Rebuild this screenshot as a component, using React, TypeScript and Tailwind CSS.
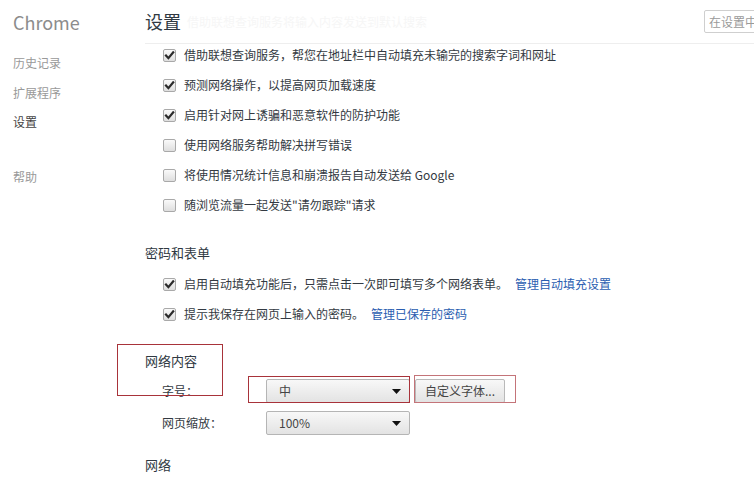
import React from 'react';

const font = { fontFamily: '"Noto Sans CJK SC", "Liberation Sans", sans-serif' };

function Check({ checked }: { checked: boolean }) {
  return (
    <span className="relative inline-block h-[13px] w-[13px] shrink-0 rounded-[2px] border border-[#a9a9a9] bg-gradient-to-b from-[#fafafa] to-[#dedede]">
      {checked && (
        <svg viewBox="0 0 13 13" className="absolute -left-px -top-px h-[13px] w-[13px]">
          <path d="M3 6.6 L5.4 9.2 L10.2 3.4" fill="none" stroke="#2a2a2a" strokeWidth="2.2" strokeLinecap="square" />
        </svg>
      )}
    </span>
  );
}

function Row({ checked, children }: { checked: boolean; children: React.ReactNode }) {
  return (
    <div className="flex h-[30px] items-center gap-[8px] pl-[18px] text-[12px] text-[#333a42]">
      <Check checked={checked} />
      <span>{children}</span>
    </div>
  );
}

function Select({ value }: { value: string }) {
  return (
    <div className="flex h-[24px] w-[144px] items-center justify-between rounded-[2px] border border-[#b5b5b5] bg-gradient-to-b from-[#f8f8f8] to-[#e3e3e3] pl-[12px] pr-[8px] text-[12px] text-[#444]">
      <span>{value}</span>
      <svg width="9" height="5" viewBox="0 0 9 5">
        <path d="M0 0 H9 L4.5 5 Z" fill="#111" />
      </svg>
    </div>
  );
}

export default function App() {
  return (
    <div className="relative flex h-[483px] w-[754px] overflow-hidden bg-white" style={font}>
      {/* side nav */}
      <div className="w-[145px] shrink-0 pl-[13px]">
        <div className="flex h-[44px] items-center text-[18px] text-[#8c8c8c]">Chrome</div>
        <div className="mt-[8px] flex flex-col text-[12px] text-[#999]">
          <div className="flex h-[22px] items-center">历史记录</div>
          <div className="mt-[8px] flex h-[22px] items-center">扩展程序</div>
          <div className="mt-[7px] flex h-[22px] items-center text-[#444]">设置</div>
          <div className="mt-[33px] flex h-[22px] items-center">帮助</div>
        </div>
      </div>

      {/* main */}
      <div className="flex-1">
        <div className="flex h-[44px] items-center justify-between border-b border-[#eeeeee]">
          <div className="flex items-center gap-[6px]">
            <span className="text-[18px] text-[#303942]">设置</span>
            <span className="text-[12px] text-[#f6f6f6]">借助联想查询服务将输入内容发送到默认搜索</span>
          </div>
          <div className="mr-[-30px] flex h-[23px] w-[80px] items-center overflow-hidden whitespace-nowrap rounded-[2px] border border-[#cfcfcf] pl-[4px] text-[12px] text-[#9a9a9a]">
            在设置中搜索
          </div>
        </div>

        <div className="-mt-[4px]">
          <Row checked>借助联想查询服务，帮您在地址栏中自动填充未输完的搜索字词和网址</Row>
          <Row checked>预测网络操作，以提高网页加载速度</Row>
          <Row checked>启用针对网上诱骗和恶意软件的防护功能</Row>
          <Row checked={false}>使用网络服务帮助解决拼写错误</Row>
          <Row checked={false}>将使用情况统计信息和崩溃报告自动发送给 Google</Row>
          <Row checked={false}>随浏览流量一起发送"请勿跟踪"请求</Row>
        </div>

        <div className="mt-[21px] flex h-[24px] items-center text-[13px] text-[#303942]">密码和表单</div>
        <div className="mt-[4px]">
          <Row checked>
            启用自动填充功能后，只需点击一次即可填写多个网络表单。
            <span className="ml-[7px] text-[#2a5db0]">管理自动填充设置</span>
          </Row>
          <Row checked>
            提示我保存在网页上输入的密码。
            <span className="ml-[7px] text-[#2a5db0]">管理已保存的密码</span>
          </Row>
        </div>

        <div className="mt-[20px] flex h-[24px] items-center text-[13px] text-[#303942]">网络内容</div>
        <div className="mt-[6px] flex items-center pl-[17px] text-[12px] text-[#333a42]">
          <span className="w-[104px]">字号：</span>
          <Select value="中" />
          <div className="ml-[5px] flex h-[24px] w-[90px] items-center justify-center rounded-[2px] border border-[#b9b9b9] bg-gradient-to-b from-[#f8f8f8] to-[#e3e3e3] text-[12px] text-[#444]">
            自定义字体...
          </div>
        </div>
        <div className="mt-[8px] flex items-center pl-[17px] text-[12px] text-[#333a42]">
          <span className="w-[104px]">网页缩放：</span>
          <Select value="100%" />
        </div>

        <div className="mt-[18px] flex h-[24px] items-center text-[13px] text-[#303942]">网络</div>
      </div>

      {/* red annotation boxes */}
      <div className="pointer-events-none absolute left-[117px] top-[344px] h-[52px] w-[106px] border border-[#a8333a]" />
      <div className="pointer-events-none absolute left-[248px] top-[376px] h-[27px] w-[162px] border border-[#a8333a]" />
      <div className="pointer-events-none absolute left-[414px] top-[375px] h-[28px] w-[102px] border border-[#c47479]" />
    </div>
  );
}
